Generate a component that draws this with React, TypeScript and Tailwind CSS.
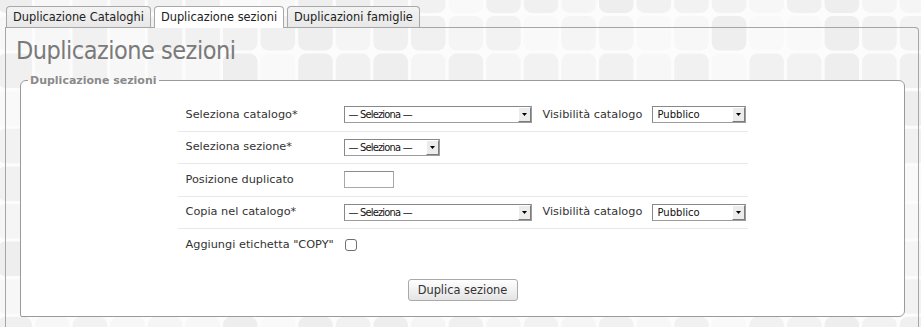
import React from "react";

const PALETTE = ["#eeeeee", "#f0f0f0", "#f2f2f2", "#f5f5f5", "#f7f7f7", "#f9f9f9", "#f1f1f1"];

function Backdrop() {
  const tiles: React.ReactElement[] = [];
  for (let j = 0; j < 12; j++) {
    for (let i = 0; i < 26; i++) {
      const x = -2.6 + 37.6 * i;
      const y = -21.6 + 37.6 * j;
      const c = PALETTE[(i * 73 + j * 151 + i * j * 17 + ((i * i) % 5)) % PALETTE.length];
      tiles.push(<rect key={`${i}-${j}`} x={x} y={y} width={34.5} height={34.5} rx={8} fill={c} />);
    }
  }
  return (
    <div className="absolute inset-0 overflow-hidden">
      <svg width="921" height="460" className="block">
        <rect x="0" y="0" width="921" height="460" fill="#fcfcfc" />
        {tiles}
      </svg>
    </div>
  );
}

function Tab({ children, active }: { children: React.ReactNode; active?: boolean }) {
  return (
    <div
      className={
        active
          ? "relative z-10 h-[22px] rounded-t-[4px] border border-b-0 border-[#a8a8a8] bg-white px-[6px] pt-[1px] leading-[19px] text-[#222]"
          : "h-[21px] rounded-t-[4px] border border-b-0 border-[#a8a8a8] bg-linear-to-b from-[#f3f3f3] to-[#e8e8e8] px-[6px] pt-[1px] leading-[19px] text-[#222]"
      }
    >
      {children}
    </div>
  );
}

function Arrow() {
  return (
    <div className="flex h-full w-[13px] shrink-0 items-center justify-center border border-t-white border-l-white border-r-[#7c7c7c] border-b-[#7c7c7c] bg-[#ececec]">
      <svg width="5" height="3" className="block">
        <path d="M0 0H5L2.5 3Z" fill="#000" />
      </svg>
    </div>
  );
}

function SelectBox({ className, children, cond }: { className: string; children: React.ReactNode; cond?: boolean }) {
  return (
    <div className={`flex h-[17px] shrink-0 items-stretch border border-[#9c9c9c] border-t-[#888] border-l-[#888] bg-white ${className}`}>
      <div
        className={
          cond
            ? "flex-1 overflow-hidden whitespace-nowrap pl-[4px] font-['DejaVu_Sans_Condensed','DejaVu_Sans',sans-serif] text-[11px] leading-[15px] tracking-[-0.8px] text-[#111] font-stretch-condensed"
            : "flex-1 overflow-hidden whitespace-nowrap pl-[5px] text-[10px] leading-[15px] text-[#111]"
        }
      >
        {children}
      </div>
      <Arrow />
    </div>
  );
}

function Row({ label, children, last }: { label: string; children?: React.ReactNode; last?: boolean }) {
  return (
    <div className={last ? "flex h-[32.5px] items-center" : "flex h-[32.5px] items-center border-b border-[#e8e8e8]"}>
      <div className="w-[166px] shrink-0 whitespace-nowrap pl-[8px] pt-[1px] text-[#333]">{label}</div>
      {children}
    </div>
  );
}

export default function App() {
  return (
    <div className="relative min-h-[327px] w-[921px] overflow-hidden font-['DejaVu_Sans','Verdana',sans-serif] text-[11.3px]">
      <Backdrop />
      <div className="relative pl-[5px] pr-[2px] pt-[6px]">
        <div className="flex h-[21px] items-start gap-[3px] pl-[1px] text-[11.4px]">
          <Tab>Duplicazione Cataloghi</Tab>
          <Tab active>Duplicazione sezioni</Tab>
          <Tab>Duplicazioni famiglie</Tab>
        </div>
        <div className="rounded-tr-[4px] border border-b-0 border-[#a6a6a6] pb-[40px]">
          <h1 className="mt-[8px] pl-[10px] font-['DejaVu_Sans_Condensed','DejaVu_Sans',sans-serif] text-[25px] font-normal leading-[30px] tracking-[-0.5px] text-[#7a7a7a] font-stretch-condensed">
            Duplicazione sezioni
          </h1>
          <fieldset className="mt-[8px] ml-[14px] mr-[13px] min-w-0 rounded-[6px] rounded-bl-[2px] border border-[#9a9a9a] bg-white px-0 pt-[12px] pb-[15px]">
            <legend className="ml-[7px] px-[2px] text-[11px] font-bold leading-[13px] text-[#8a8a8a]">Duplicazione sezioni</legend>
            <div className="mx-auto w-[570px]">
              <Row label="Seleziona catalogo*">
                <SelectBox className="w-[188px]" cond>
                  — Seleziona —
                </SelectBox>
                <div className="ml-[11px] w-[109px] shrink-0 whitespace-nowrap pt-[1px] text-[#333]">Visibilità catalogo</div>
                <SelectBox className="w-[94px]">Pubblico</SelectBox>
              </Row>
              <Row label="Seleziona sezione*">
                <SelectBox className="w-[96px]" cond>
                  — Seleziona —
                </SelectBox>
              </Row>
              <Row label="Posizione duplicato">
                <div className="h-[17px] w-[50px] border border-[#a8a8a8] border-t-[#8c8c8c] bg-white" />
              </Row>
              <Row label="Copia nel catalogo*">
                <SelectBox className="w-[188px]" cond>
                  — Seleziona —
                </SelectBox>
                <div className="ml-[11px] w-[109px] shrink-0 whitespace-nowrap pt-[1px] text-[#333]">Visibilità catalogo</div>
                <SelectBox className="w-[94px]">Pubblico</SelectBox>
              </Row>
              <Row label={'Aggiungi etichetta "COPY"'} last>
                <div className="ml-[1px] h-[12px] w-[12px] rounded-[3px] border border-[#707070] bg-white" />
              </Row>
            </div>
            <button className="mx-auto mt-[17px] block h-[22px] w-[110px] rounded-[3px] border border-[#a9a9a9] bg-linear-to-b from-white to-[#e4e4e4] text-[11.4px] leading-[20px] text-[#333]">
              Duplica sezione
            </button>
          </fieldset>
        </div>
      </div>
    </div>
  );
}
